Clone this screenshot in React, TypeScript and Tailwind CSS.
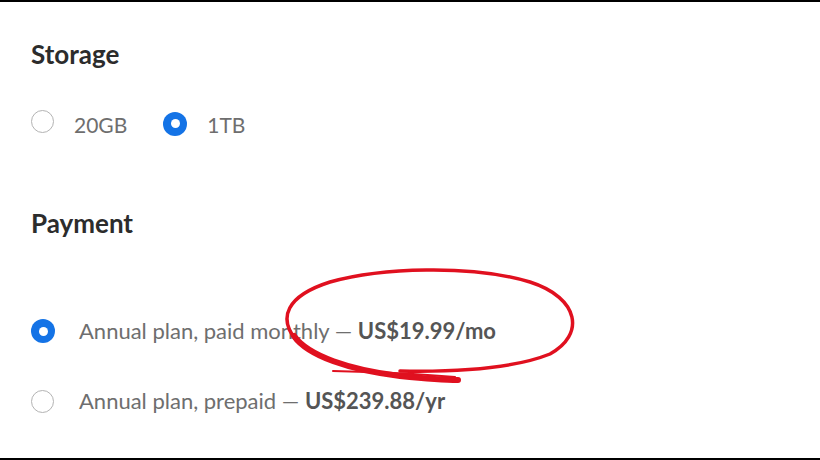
import React from "react";

function Radio({ checked }: { checked: boolean }) {
  return checked ? (
    <span className="inline-flex h-[24px] w-[24px] shrink-0 items-center justify-center rounded-full bg-[#1473e6]">
      <span className="h-[9px] w-[9px] rounded-full bg-white" />
    </span>
  ) : (
    <span className="inline-block h-[23px] w-[23px] shrink-0 rounded-full border border-[#b3b3b3] bg-white" />
  );
}

export default function App() {
  return (
    <div
      className="relative h-[460px] w-[820px] overflow-hidden bg-white"
      style={{ fontFamily: "Lato, 'Open Sans', sans-serif" }}
    >
      <div className="h-[2px] w-full bg-black" />
      <div className="pl-[31px]">
        <h2 className="mt-[36px] text-[26px] font-bold leading-[32px] text-[#2c2c2c]">Storage</h2>
        <div className="mt-[40px] flex items-start">
          <Radio checked={false} />
          <span className="ml-[20px] pt-[1px] text-[21px] leading-[28px] text-[#6e6e6e]">20GB</span>
          <span className="ml-[36px]">
            <Radio checked />
          </span>
          <span className="ml-[20px] pt-[1px] text-[21px] leading-[28px] text-[#6e6e6e]">1TB</span>
        </div>
        <h2 className="mt-[68px] text-[26px] font-bold leading-[32px] text-[#2c2c2c]">Payment</h2>
        <div className="mt-[77px] flex items-center">
          <Radio checked />
          <span className="ml-[24px] text-[22px] leading-[30px] text-[#6e6e6e]">
            Annual plan, paid monthly — <span className="font-bold text-[#555555]">US$19.99/mo</span>
          </span>
        </div>
        <div className="mt-[40px] flex items-center">
          <Radio checked={false} />
          <span className="ml-[25px] text-[22px] leading-[30px] text-[#6e6e6e]">
            Annual plan, prepaid — <span className="font-bold text-[#555555]">US$239.88/yr</span>
          </span>
        </div>
      </div>
      <div className="absolute bottom-0 left-0 h-[2px] w-full bg-black" />
      <svg
        className="pointer-events-none absolute left-0 top-0"
        width="820"
        height="460"
        viewBox="0 0 820 460"
      >
        <path
          d="M 296 340 C 278 318, 286 296, 330 282 C 380 268, 470 264, 530 282 C 580 298, 585 335, 550 354 C 510 370, 450 372, 400 371"
          fill="none"
          stroke="#e0101f"
          strokeWidth="3.5"
          strokeLinecap="round"
        />
        <path
          d="M 294 336 C 308 356, 350 370, 400 376 C 430 379, 450 380, 458 380"
          fill="none"
          stroke="#e0101f"
          strokeWidth="6"
          strokeLinecap="round"
        />
        <path
          d="M 333 371 C 380 372, 420 374, 455 377"
          fill="none"
          stroke="#e0101f"
          strokeWidth="2"
          strokeLinecap="round"
        />
      </svg>
    </div>
  );
}
